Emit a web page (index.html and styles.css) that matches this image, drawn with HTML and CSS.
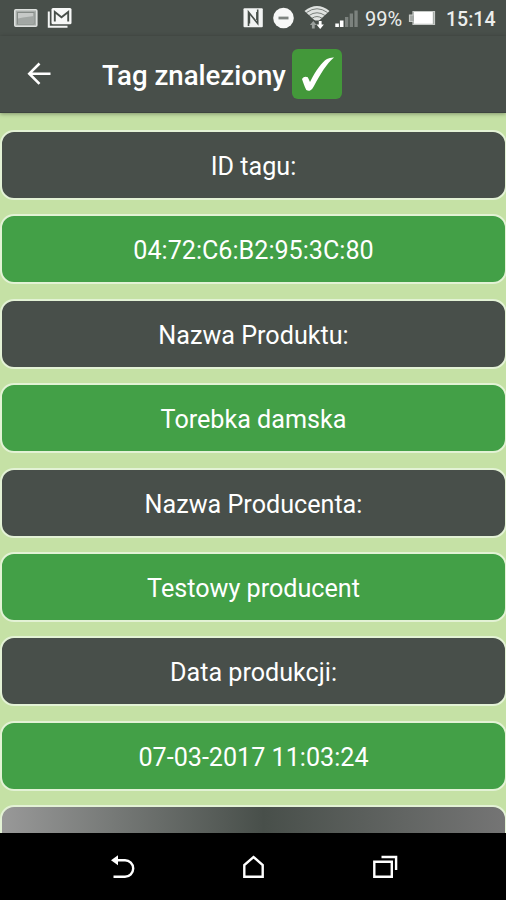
FILE: index.html
```html
<!DOCTYPE html>
<html lang="pl">

<head>
    <meta charset="UTF-8">
    <meta name="viewport" content="width=device-width, initial-scale=1.0">
    <title>Tag znaleziony</title>
    <link rel="stylesheet" href="styles.css">
</head>

<body>

    <div class="statusBar">
        <svg class="statusLeft" width="80" height="36" viewBox="0 0 80 36">
            <rect x="14.8" y="9.8" width="22" height="16.5" rx="1" fill="#a9aeab" stroke="#dde0de" stroke-width="1.6" />
            <rect x="17.500" y="12.500" width="16.500" height="11.500" fill="#c6c9c7" stroke="#858b87" stroke-width="1" />
            <path d="M18 18.500l5-1 11-1.500v7.500H18z" fill="#a2a7a4" />
            <path d="M48.800 11.500v15.300h18.700" fill="none" stroke="#f3f5f4" stroke-width="2" />
            <rect x="51.500" y="8" width="20" height="16.200" rx="1.500" fill="#f7f8f7" />
            <path d="M54.800 21.500V12l6.700 5.200L68.200 12v9.500" fill="none" stroke="#484f4a" stroke-width="1.900" />
        </svg>
        <svg class="statusRight" width="120" height="36" viewBox="240 0 120 36">
            <!-- nfc -->
            <rect x="243.500" y="8.200" width="19.300" height="19" rx="1" fill="#f2f4f3" />
            <path d="M248.500 26V12l9.200 11.500V9.500" fill="none" stroke="#484f4a" stroke-width="1.600" />
            <path d="M249.300 14v9.500M257 12v8" stroke="#484f4a" stroke-width="1.800" />
            <!-- do not disturb -->
            <circle cx="283.500" cy="18" r="10.300" fill="#f7f8f7" />
            <path d="M278.500 18h10" stroke="#7d837f" stroke-width="2.800" />
            <!-- wifi -->
            <path d="M304.500 11q12.500-10 25 0L317 22.500z" fill="#dfe2e0" />
            <path d="M306.500 12.500q10.500-7.500 21 0M309 15.500q8-5.500 16 0M312 18.300q5-3.500 10 0" fill="none" stroke="#6b726d" stroke-width="0.900" />
            <path d="M309 20.500h16v9h-16z" fill="#484f4a" />
            <path d="M313.300 21l3.400 4h-2v3.500h-2.800V25h-2z" fill="#9a9f9c" />
            <path d="M318.800 21h2.800v3.500h2.300l-3.700 4.500-3.700-4.500h2.300z" fill="#fff" />
            <!-- signal -->
            <path d="M335.300 23.500h3.600V27h-3.600zM339.900 20.500h3.600V27h-3.600z" fill="#fff" />
            <path d="M345 17h3.300v10H345zM349.700 13.500h3.300V27h-3.300zM354.400 10.500h3.300V27h-3.300z" fill="#7c827e" />
        </svg>
        <span class="percent">99%</span>
        <svg class="battery" width="30" height="36" viewBox="408 0 30 36">
            <path d="M413 11.500h21.500V24.500H413v-3h-3.500v-6.500h3.500z" fill="#a2a7a4" stroke="#c5c9c6" stroke-width="1.200" />
            <rect x="414" y="12" width="18.800" height="11.800" fill="#fff" />
        </svg>
        <span class="clock">15:14</span>
    </div>

    <div class="toolbar">
        <svg class="backArrow" width="24" height="24" viewBox="0 0 24 24">
            <path d="M23.500 11.700H2.500M12.500 1.500L2.300 11.700l10.200 10.200" />
        </svg>
        <h1>Tag znaleziony</h1>
        <div class="check">
            <svg width="50" height="50" viewBox="0 0 50 50">
                <path d="M42 8.500C34.500 15 29 24 22 37q-1.500 3-3.500 4.300-2 1.200-4.200-.3C12.500 37.500 11 33 10 30q2-3.300 5.800-1.800L18 33C24 21 30 13 35 10q3-1.700 7-1.500z" />
            </svg>
        </div>
    </div>

    <div class="list">
        <div class="row label">ID tagu:</div>
        <div class="row value">04:72:C6:B2:95:3C:80</div>
        <div class="row label">Nazwa Produktu:</div>
        <div class="row value">Torebka damska</div>
        <div class="row label">Nazwa Producenta:</div>
        <div class="row value">Testowy producent</div>
        <div class="row label">Data produkcji:</div>
        <div class="row value">07-03-2017 11:03:24</div>
        <div class="row more"></div>
    </div>

    <div class="navBar">
        <svg width="28" height="28" viewBox="0 0 28 28">
            <path d="M8 7.300h9a8.200 8.200 0 0 1 0 16.400H5.500" />
            <path class="solid" d="M3 7.300L10 2.300v10z" />
        </svg>
        <svg width="28" height="28" viewBox="0 0 28 28">
            <path d="M5.300 23.700V12L14.500 4l9.200 8v11.700z" />
        </svg>
        <svg width="28" height="28" viewBox="0 0 28 28">
            <path d="M4.300 8.700h17.500v15H4.300zM11.500 4h14.600v13" />
        </svg>
    </div>

</body>

</html>
```
FILE: styles.css
```css
body {
    margin: 0;
    height: 900px;
    display: flex;
    flex-direction: column;
    overflow: hidden;
    background-color: #c5e1a5;
    font-family: Roboto, "Liberation Sans", sans-serif;
    color: white;
}

.statusBar {
    height: 36px;
    flex: none;
    display: flex;
    align-items: center;
    background-color: #484f4a;
    font-size: 20px;
    color: #eceeed;
}

.statusRight {
    margin-left: 160px;
}

.percent {
    width: 42px;
    margin-left: 5px;
    padding-top: 2px;
}

.battery {
    margin-left: 1px;
}

.clock {
    margin-left: 8px;
    padding-top: 2px;
    font-weight: 500;
    font-size: 19.5px;
}

.toolbar {
    height: 76px;
    flex: none;
    display: flex;
    align-items: center;
    background-color: #484f4a;
    border-bottom: 1px solid #3d443f;
    box-shadow: 0 1px 4px rgba(0, 0, 0, 0.35);
}

.backArrow {
    margin-left: 27px;
    fill: none;
    stroke: white;
    stroke-width: 2.6;
}

.toolbar h1 {
    width: 184px;
    margin: 0 6px 0 51px;
    padding-top: 2px;
    font-size: 27.6px;
    font-weight: 500;
    white-space: nowrap;
}

.check {
    width: 50px;
    height: 50px;
    border-radius: 6px;
    background-color: #43983a;
}

.check svg {
    display: block;
    fill: white;
}

.list {
    flex: 1;
    width: 507px;
    min-height: 0;
    overflow: hidden;
    display: flex;
    flex-direction: column;
    gap: 14.4px;
    padding: 17px 0 0;
}

.row {
    box-sizing: border-box;
    height: 70px;
    flex: none;
    display: flex;
    justify-content: center;
    align-items: center;
    padding-top: 3px;
    border: 2px solid #e3f2d5;
    border-radius: 14px;
    font-size: 25.15px;
}

.label {
    background-color: #484f4a;
}

.value {
    background-color: #43a047;
}

.more {
    background: linear-gradient(to right, #999, #484f4a 52%, #757575) border-box;
}

.navBar {
    height: 67px;
    flex: none;
    display: flex;
    justify-content: center;
    align-items: center;
    gap: 103px;
    background-color: black;
}

.navBar svg {
    fill: none;
    stroke: white;
    stroke-width: 2.4;
}

.navBar .solid {
    fill: white;
    stroke: none;
}
```
